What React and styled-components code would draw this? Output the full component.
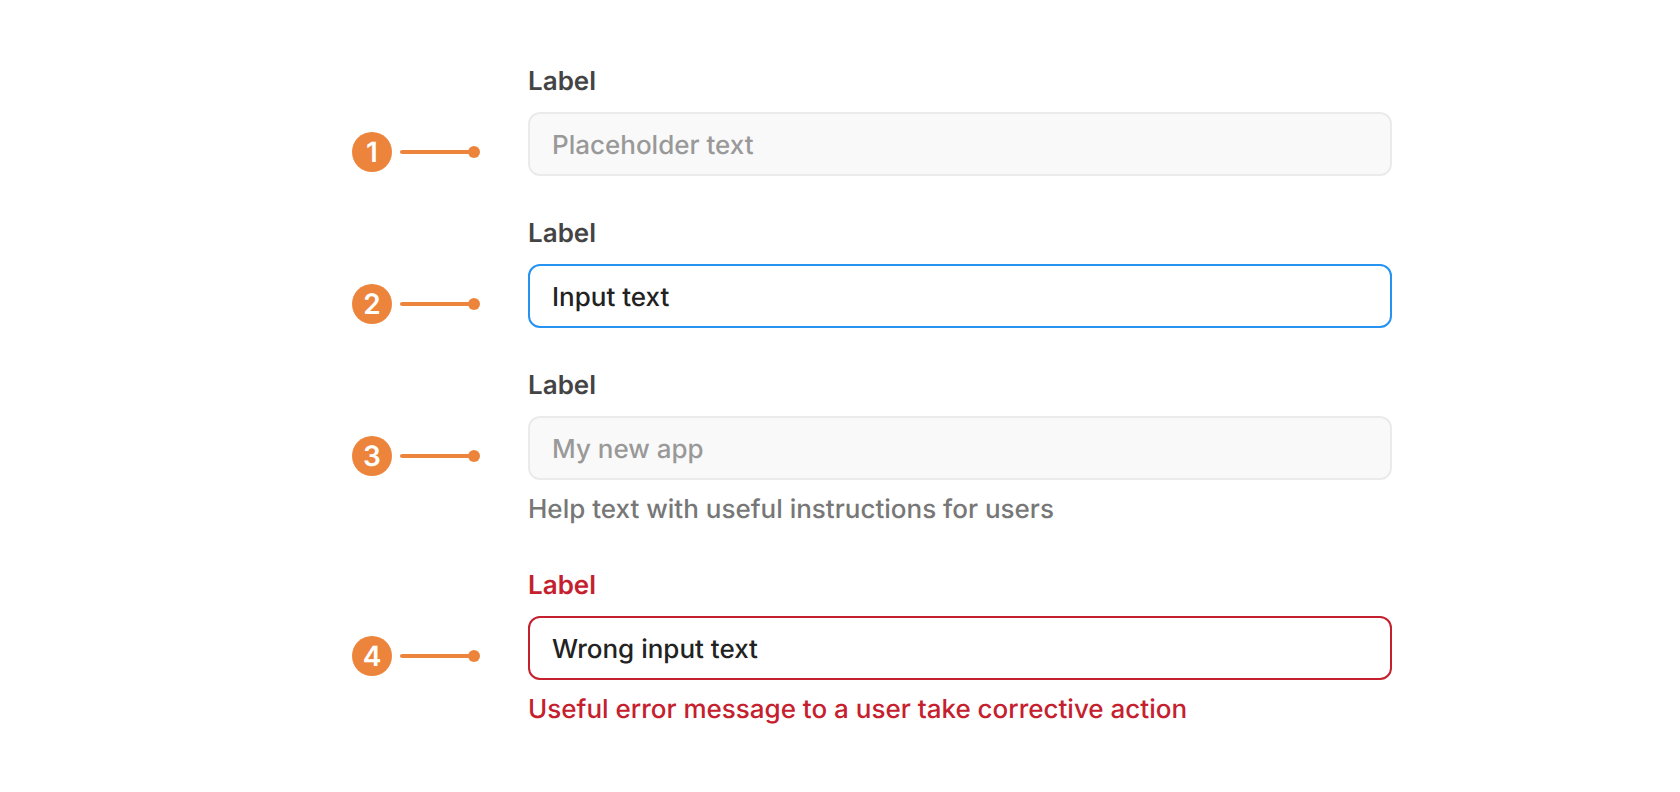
import React from "react";
import styled, { createGlobalStyle } from "styled-components";

const GlobalStyle = createGlobalStyle`
  *, *::before, *::after { box-sizing: border-box; }
  body {
    margin: 0;
    background: #fff;
    font-family: Inter, "Liberation Sans", sans-serif;
    -webkit-font-smoothing: antialiased;
    text-rendering: geometricPrecision;
  }
`;

const tones = {
  muted: { label: "#444444", border: "#ebebeb", fill: "#f9f9f9", hint: "#777777" },
  active: { label: "#444444", border: "#2693f2", fill: "#ffffff", hint: "#777777" },
  error: { label: "#c5202e", border: "#c5202e", fill: "#ffffff", hint: "#c5202e" },
};

const Page = styled.main`
  display: flex;
  flex-direction: column;
  gap: 40px;
  padding: 64px 288px 64px 352px;

  @media (max-width: 1100px) {
    padding: 64px 32px;
  }
`;

const Row = styled.section`
  display: flex;
  align-items: flex-start;
  gap: 48px;
`;

const Callout = styled.div`
  display: flex;
  align-items: center;
  gap: 8px;
  margin-top: 68px;
`;

const Badge = styled.span`
  display: flex;
  align-items: center;
  justify-content: center;
  width: 40px;
  height: 40px;
  border-radius: 50%;
  background: #ed843c;
  color: #fff;
  font-size: 28px;
  font-weight: 600;
  line-height: 40px;
`;

const Pointer = styled.span`
  display: flex;
  align-items: center;
  width: 80px;

  &::before {
    content: "";
    flex: 1;
    height: 4px;
    margin-right: -2px;
    border-radius: 2px;
    background: #ed843c;
  }

  &::after {
    content: "";
    width: 12px;
    height: 12px;
    border-radius: 50%;
    background: #ed843c;
  }
`;

const Field = styled.div`
  display: flex;
  flex: 1;
  min-width: 0;
  flex-direction: column;
`;

const Label = styled.label`
  margin-bottom: 12px;
  color: ${({ $tone }) => tones[$tone].label};
  font-size: 26px;
  font-weight: 600;
  line-height: 36px;
`;

const Input = styled.input`
  width: 100%;
  height: 64px;
  padding: 2px 22px 0;
  border: 2px solid ${({ $tone }) => tones[$tone].border};
  border-radius: 12px;
  outline: none;
  background: ${({ $tone }) => tones[$tone].fill};
  color: #222222;
  font-family: inherit;
  font-size: 26px;
  font-weight: 450;
  text-rendering: inherit;

  &::placeholder {
    color: #999999;
    opacity: 1;
  }
`;

const Hint = styled.p`
  margin: 12px 0 0;
  color: ${({ $tone }) => tones[$tone].hint};
  font-size: 26px;
  font-weight: 450;
  line-height: 36px;
`;

const fields = [
  { tone: "muted", placeholder: "Placeholder text" },
  { tone: "active", value: "Input text" },
  { tone: "muted", placeholder: "My new app", hint: "Help text with useful instructions for users" },
  { tone: "error", value: "Wrong input text", hint: "Useful error message to a user take corrective action" },
];

export default function App() {
  return (
    <>
      <GlobalStyle />
      <Page>
        {fields.map(({ tone, placeholder, value, hint }, i) => {
          const id = `field-${i + 1}`;
          return (
            <Row key={id}>
              <Callout>
                <Badge>{i + 1}</Badge>
                <Pointer />
              </Callout>
              <Field>
                <Label htmlFor={id} $tone={tone}>Label</Label>
                <Input
                  id={id}
                  type="text"
                  $tone={tone}
                  placeholder={placeholder}
                  defaultValue={value}
                  aria-invalid={tone === "error" || undefined}
                  aria-describedby={hint ? `${id}-hint` : undefined}
                />
                {hint && <Hint id={`${id}-hint`} $tone={tone}>{hint}</Hint>}
              </Field>
            </Row>
          );
        })}
      </Page>
    </>
  );
}
